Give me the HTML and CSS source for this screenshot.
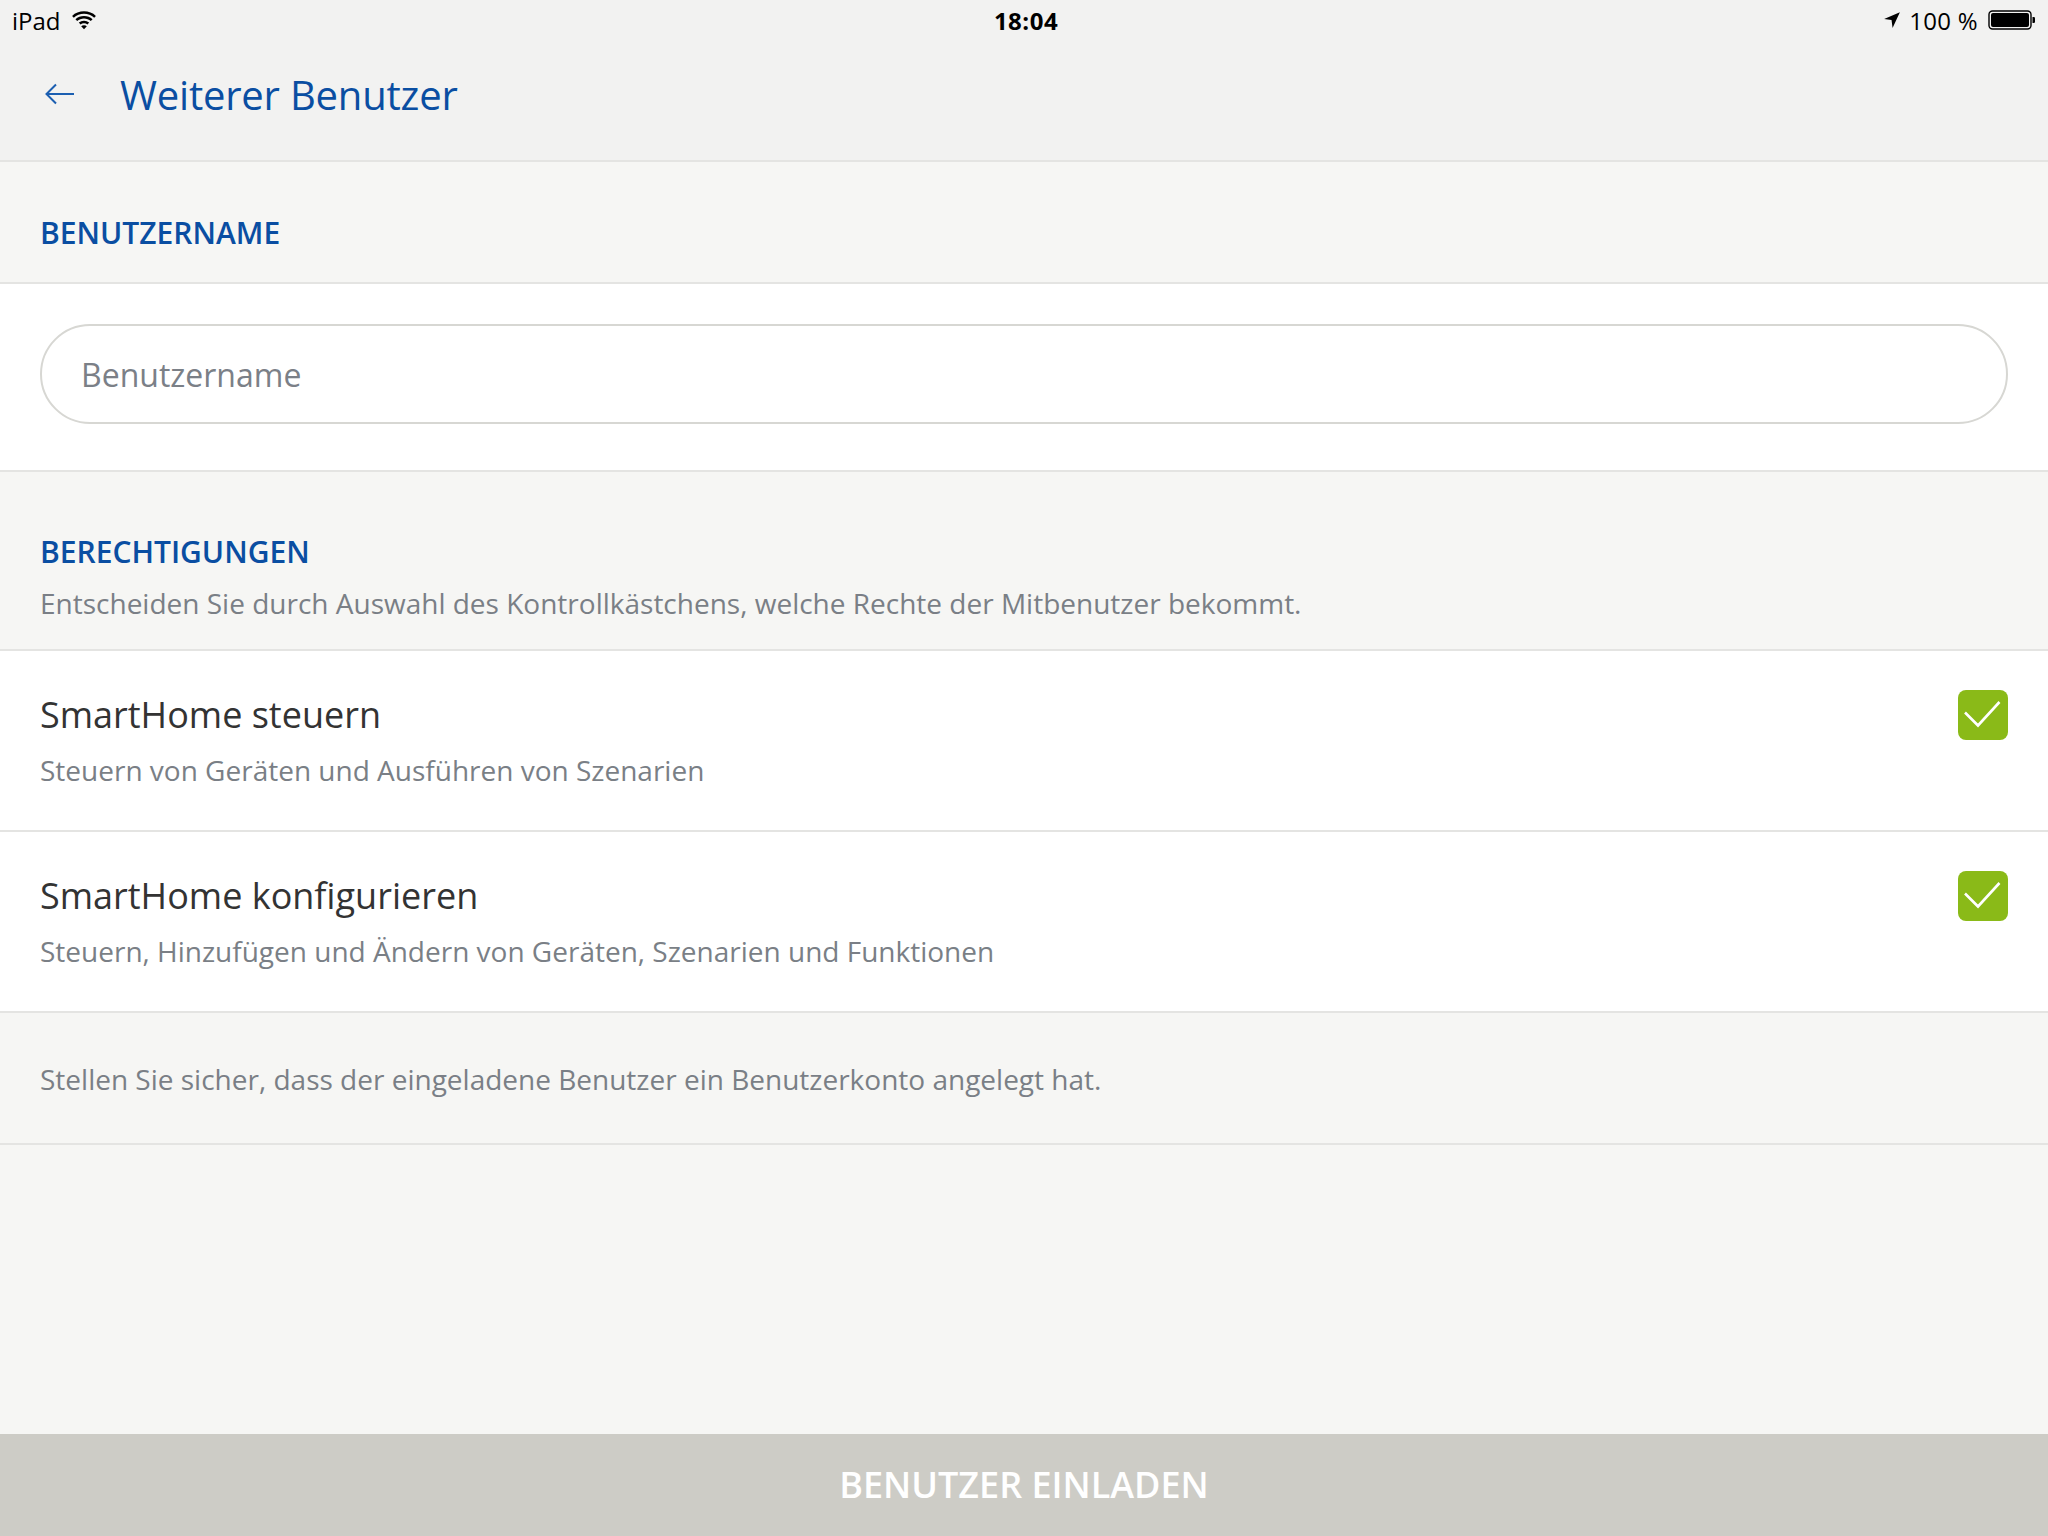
FILE: index.html
```html
<!DOCTYPE html>
<html lang="de">
<head>
<meta charset="utf-8">
<title>Weiterer Benutzer</title>
<link rel="stylesheet" href="styles.css">
</head>
<body>
<div class="app">
  <header class="top">
    <div class="status">
      <div class="status-left">
        <span>iPad</span>
        <svg class="wifi" viewBox="0 0 24 18" width="26" height="20">
          <path d="M12 3.2c3.6 0 6.9 1.4 9.4 3.7l1.6-1.7C20.1 2.5 16.2 1 12 1S3.9 2.5 1 5.2l1.6 1.7C5.1 4.6 8.4 3.2 12 3.2z" fill="#000"/>
          <path d="M12 7.6c2.4 0 4.6.9 6.3 2.4l1.6-1.7C17.8 6.4 15 5.3 12 5.3S6.2 6.4 4.1 8.3l1.6 1.7C7.4 8.5 9.6 7.6 12 7.6z" fill="#000"/>
          <path d="M12 11.9c1.2 0 2.300.4 3.2 1.2l1.6-1.7C15.5 10.3 13.8 9.6 12 9.6s-3.5.7-4.8 1.8l1.6 1.7c.9-.8 2-1.2 3.2-1.2z" fill="#000"/>
          <path d="M12 17.5l2.6-2.8c-.7-.6-1.6-.9-2.6-.9s-1.9.3-2.6.9z" fill="#000"/>
        </svg>
      </div>
      <div class="status-time">18:04</div>
      <div class="status-right">
        <svg class="loc" viewBox="0 0 16 16" width="18" height="18">
          <path d="M15 1L1 7.2l6.6.9.9 6.9z" fill="#000"/>
        </svg>
        <span>100 %</span>
        <svg class="battery" viewBox="0 0 48 20" width="48" height="20">
          <rect x="1" y="1" width="42" height="18" rx="3.5" fill="none" stroke="#000" stroke-width="1.4"/>
          <rect x="3" y="3" width="38" height="14" rx="2" fill="#000"/>
          <path d="M44.5 7h1.2a1.3 1.3 0 0 1 1.3 1.3v3.4a1.3 1.3 0 0 1-1.3 1.3h-1.2z" fill="#000"/>
        </svg>
      </div>
    </div>
    <nav class="nav">
      <svg class="back" viewBox="0 0 32 24" width="32" height="24">
        <path d="M30 12H3M12 2.5L2.5 12 12 21.5" fill="none" stroke="#1c5fb1" stroke-width="2"/>
      </svg>
      <h1 class="title">Weiterer Benutzer</h1>
    </nav>
  </header>

  <section class="group-head head-name">
    <h2 class="group-title">BENUTZERNAME</h2>
  </section>

  <section class="input-block">
    <div class="field">Benutzername</div>
  </section>

  <section class="group-head head-perm">
    <h2 class="group-title">BERECHTIGUNGEN</h2>
    <p class="group-desc">Entscheiden Sie durch Auswahl des Kontrollkästchens, welche Rechte der Mitbenutzer bekommt.</p>
  </section>

  <div class="row">
    <div class="row-text">
      <div class="row-title">SmartHome steuern</div>
      <div class="row-sub">Steuern von Geräten und Ausführen von Szenarien</div>
    </div>
    <div class="check">
      <svg viewBox="0 0 50 50" width="50" height="50">
        <path d="M7 22.5L20 35.5 41.5 12" fill="none" stroke="#fff" stroke-width="2.6"/>
      </svg>
    </div>
  </div>

  <div class="row">
    <div class="row-text">
      <div class="row-title">SmartHome konfigurieren</div>
      <div class="row-sub">Steuern, Hinzufügen und Ändern von Geräten, Szenarien und Funktionen</div>
    </div>
    <div class="check">
      <svg viewBox="0 0 50 50" width="50" height="50">
        <path d="M7 22.5L20 35.5 41.5 12" fill="none" stroke="#fff" stroke-width="2.6"/>
      </svg>
    </div>
  </div>

  <section class="note">
    <p>Stellen Sie sicher, dass der eingeladene Benutzer ein Benutzerkonto angelegt hat.</p>
  </section>

  <div class="spacer"></div>

  <div class="cta">BENUTZER EINLADEN</div>
</div>
</body>
</html>
```

FILE: styles.css
```css
* { box-sizing: border-box; }

html, body {
  margin: 0;
  padding: 0;
  width: 2048px;
  height: 1536px;
  overflow: hidden;
}

body {
  font-family: "Open Sans", "Noto Sans", "Liberation Sans", sans-serif;
  background: #f6f6f4;
  color: #333;
}

.app {
  display: flex;
  flex-direction: column;
  height: 1536px;
}

.top {
  background: #f2f2f1;
  border-bottom: 2px solid #e4e4e2;
  height: 162px;
}

.status {
  height: 40px;
  display: flex;
  align-items: center;
  justify-content: space-between;
  padding: 0 12px;
  font-size: 24px;
  color: #000;
}

.status-left {
  display: flex;
  align-items: center;
  gap: 10px;
  width: 300px;
}

.status-time {
  font-weight: 700;
  font-size: 24px;
  letter-spacing: 0.5px;
  padding-left: 4px;
}

.status-right {
  display: flex;
  align-items: center;
  justify-content: flex-end;
  gap: 8px;
  width: 300px;
}

.status-right span { letter-spacing: 0.3px; }

.battery { margin-left: 2px; }

.nav {
  height: 108px;
  display: flex;
  align-items: center;
  padding-left: 44px;
}

.back { margin-right: 44px; }

.title {
  margin: 0;
  font-weight: 400;
  font-size: 40px;
  color: #0a4ea2;
  letter-spacing: -0.2px;
}

.group-head {
  background: #f6f6f4;
  border-bottom: 2px solid #e4e4e2;
  padding: 0 40px;
}

.head-name {
  height: 122px;
  padding-top: 51px;
}

.head-perm {
  height: 179px;
  padding-top: 60px;
}

.group-title {
  margin: 0;
  font-size: 30px;
  line-height: 40px;
  font-weight: 600;
  color: #0a4ea2;
}

.group-desc {
  margin: 11px 0 0;
  font-size: 28px;
  line-height: 40px;
  color: #7a7f86;
}

.input-block {
  background: #fff;
  border-bottom: 2px solid #e4e4e2;
  height: 188px;
  padding: 40px 40px 0;
}

.field {
  height: 100px;
  border: 2px solid #d7d7d3;
  border-radius: 50px;
  display: flex;
  align-items: center;
  padding-left: 39px;
  font-size: 32px;
  color: #7b8087;
  background: #fff;
}

.row {
  background: #fff;
  border-bottom: 2px solid #e4e4e2;
  height: 181px;
  padding: 39px 40px 0;
  display: flex;
  justify-content: space-between;
  align-items: flex-start;
}

.row-title {
  font-size: 36px;
  line-height: 48px;
  color: #333;
  padding-top: 1px;
}

.row-sub {
  margin-top: 11px;
  font-size: 28px;
  line-height: 40px;
  color: #7a7f86;
}

.check {
  width: 50px;
  height: 50px;
  border-radius: 8px;
  background: #8aba18;
}

.check svg { display: block; }

.note {
  background: #f6f6f4;
  border-bottom: 2px solid #e4e4e2;
  height: 132px;
  padding: 46px 40px 0;
}

.note p {
  margin: 0;
  font-size: 28px;
  line-height: 40px;
  color: #7a7f86;
}

.spacer { flex: 1; }

.cta {
  height: 102px;
  background: #cdccc6;
  color: #fff;
  font-size: 36px;
  font-weight: 600;
  display: flex;
  align-items: center;
  justify-content: center;
  padding-bottom: 2px;
}
```
